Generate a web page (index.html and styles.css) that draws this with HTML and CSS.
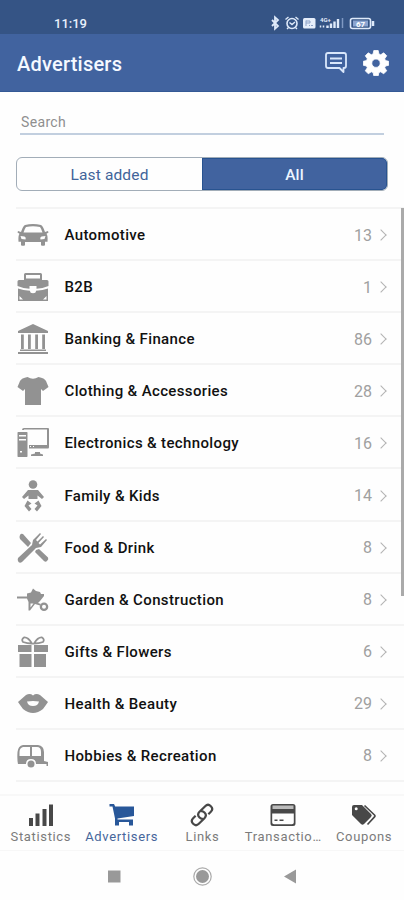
FILE: index.html
```
<!DOCTYPE html>
<html lang="en">
<head>
<meta charset="utf-8">
<title>Advertisers</title>
<link rel="stylesheet" href="styles.css">
</head>
<body>
<div class="app">
  <div class="status">
    <span class="time">11:19</span>
    <svg class="status-icons" width="108" height="16" viewBox="0 0 108 16" fill="none" stroke="#dfeafa">
      <path d="M3 5l6 6-3 2.800V2.200L9 5l-6 6" stroke-width="1.800"/>
      <circle cx="23" cy="8.500" r="5" stroke-width="1.600"/><path d="M16.500 4.500l3-2.500M29.500 4.500l-3-2.500M20.500 7.500l2.500 2 3-2.500M19.500 12.500l-1.500 1.500M26.500 12.500l1.500 1.500" stroke-width="1.400"/>
      <rect x="34" y="3" width="12.500" height="10.500" rx="1.500" fill="#e6eefb" stroke="none"/><path d="M37 5.500v5.500M37 6h4v2h-4M42 10.500h2M40 10.500h1" stroke="#8da2c7"/>
      <path d="M51.500 12.500v-2M54.500 12.500v-2" stroke-width="1.500"/>
      <path d="M58.500 13v-2.500M62 13V8.500M65.500 13V6.500M69 13V4" stroke-width="2.400"/><path d="M73.500 13V3" stroke="#7f98c3" stroke-width="1.500"/>
      <rect x="81.500" y="3.500" width="20" height="10" rx="2" stroke-width="1.600"/><rect x="84" y="5.500" width="15" height="6" fill="#8ba5d0" stroke="none"/><path d="M104 6v5" stroke-width="2.500"/>
      <text x="51" y="7" class="micro">4G+</text><text x="87" y="11.500" class="battery">67</text>
    </svg>
  </div>
  <header class="header">
    <h1>Advertisers</h1>
    <svg class="chat" width="24" height="24" viewBox="0 0 24 24" fill="none" stroke="#d9e7fb" stroke-width="1.800"><path d="M4 2h16q2 0 2 2v11q0 2-2 2h-.5v4l-4-4H4q-2 0-2-2V4q0-2 2-2z" stroke-linejoin="round"/><path d="M6 7.500h12M6 12h12"/></svg>
    <svg class="gear" width="26" height="26" viewBox="0 0 26 26"><path fill="#fff" stroke="#fff" stroke-width=".8" stroke-linejoin="round" fill-rule="evenodd" d="M10.800.5h4.400l.7 3.500 1.800.8 3-2 3 3-2 3 .8 1.800 3.200.7v4l-3.200.7-.8 1.800 2 3-3 3-3-2-1.800.8-.7 3.200h-4.400l-.7-3.200-1.800-.8-3 2-3-3 2-3-.8-1.800-3.200-.7v-4l3.200-.7.800-1.800-2-3 3-3 3 2 1.800-.8zM13 9a4.200 4.200 0 1 0 0 8.400A4.200 4.200 0 0 0 13 9z"/></svg>
  </header>
  <section class="filters">
    <div class="search">Search</div>
    <div class="segments"><div class="segment">Last added</div><div class="segment selected">All</div></div>
  </section>
  <main class="list">
    <div class="row"><svg class="icon" viewBox="0 0 32 32"><path fill-rule="evenodd" d="M8 6q8-2 16 0 2 1 4 7l3-1 .5 1.500-2 1.200q1.500 2 1 8H28v3.500q-2 1-4 0V23H8v3.200q-2 1-4 0V22.700H1.500q-.5-6 1-8l-2-1.200L1 12l3 1q2-6 4-7zM9 8q-1.500 2-2.500 5.500h19Q24.500 10 23 8q-7-1.500-14 0zM3.500 17l1 3 4 .5q1-2-1-3zM28.500 17l-1 3-4 .5q-1-2 1-3z"/></svg><span class="name">Automotive</span><span class="count">13</span><i class="chevron"></i></div>
    <div class="row"><svg class="icon" viewBox="0 0 32 32"><path fill-rule="evenodd" d="M7 9V3.500Q7 2 8.500 2h15Q25 2 25 3.500V9h5q1.500 0 1.500 1.500v4.500q-6 2.500-12 2.800V15h-7v2.800Q6.500 17.500.5 15v-4.500Q.5 9 2 9zm2-5v3.500h14V4zM1 17.500q5 2 12 2.300 0 2.500 3 2.500t3-2.500q7-.3 12-2.300V30H1zM2.500 25v3.500H6zM29.500 25v3.500H26z"/></svg><span class="name">B2B</span><span class="count">1</span><i class="chevron"></i></div>
    <div class="row"><svg class="icon" viewBox="0 0 32 32"><path d="M16 1l15 7v2H1V8zM4 11.500h2.800V26H4zM11 11.500h2.800V26H11zM18.200 11.500H21V26h-2.800zM25.200 11.500H28V26h-2.800zM3 26.500h26V28H3zM1 29h30v2H1z"/></svg><span class="name">Banking &amp; Finance</span><span class="count">86</span><i class="chevron"></i></div>
    <div class="row"><svg class="icon" viewBox="0 0 32 32"><path d="M10.500 2q5.500 3.500 11 0 6 1 7.500 4l2.500 6-5.500 4-2-2v16H8V14l-2 2-5.500-4L3 6q1.500-3 7.500-4z"/></svg><span class="name">Clothing &amp; Accessories</span><span class="count">28</span><i class="chevron"></i></div>
    <div class="row"><svg class="icon" viewBox="0 0 32 32"><path fill-rule="evenodd" d="M1 5h9q.5 0 .5 1v23q0 1-.5 1H1q-.5 0-.5-1V6q0-1 .5-1zm1 3v1.500h7V8zm0 4v1.500h7V12zm1 12v1.500h2V24zM5 3q0-2 2-2h24q1 0 1 1v18q0 1.500-1 1.500H12V18h18V2.500H7V3zM18 25h5v1.500l3 1V29H14v-1.500l4-1z"/><path fill="#fff" d="M13 19h1v1h-1zM16 19h1v1h-1z"/></svg><span class="name">Electronics &amp; technology</span><span class="count">16</span><i class="chevron"></i></div>
    <div class="row"><svg class="icon" viewBox="0 0 32 32"><circle cx="16" cy="4.500" r="4.300"/><path d="M11 10h10l6 7-2 2-4.500-3.500V19h-9v-3.500L7 19l-2-2zM10.500 20.500l4 3-3 2 3 3.500-2.500 2.500L7.500 26zM21.500 20.500l-4 3 3 2-3 3.500 2.500 2.500 4.500-5.500z"/></svg><span class="name">Family &amp; Kids</span><span class="count">14</span><i class="chevron"></i></div>
    <div class="row"><svg class="icon" viewBox="0 0 32 32"><path d="M3 3q1-2 3-1l8 9-3 4-8-8q-1-2 0-4zM19 18l3-1 9 8.500q1 1.500-1 3.500-1.500 1.500-3 0l-9-9zM23 1l1 1-5 6 1.500 1.500L26 4l1 1-5.500 6 1.500 1.500L29 7l1 1-6 7-5 1L5 30q-2 1.500-3.500 0T1 26l14-13 1-5z"/></svg><span class="name">Food &amp; Drink</span><span class="count">8</span><i class="chevron"></i></div>
    <div class="row"><svg class="icon" viewBox="0 0 32 32"><path fill-rule="evenodd" d="M0 12.500h10v-3l4-1 2-4 3 2.500 4 1 1 2h3v2l-4 5-2 2 3 1-1 1.500-5-1.500-5 6.500h-1.500V18L10 14.500H0zm13.500 7v4l3-4zM27 18.500a4.300 4.300 0 1 1 0 8.600 4.300 4.300 0 0 1 0-8.600zm0 2.300a2 2 0 1 0 0 4 2 2 0 0 0 0-4z"/></svg><span class="name">Garden &amp; Construction</span><span class="count">8</span><i class="chevron"></i></div>
    <div class="row"><svg class="icon" viewBox="0 0 32 32"><path d="M1 9h13.500v7H1zM17 9h14v7H17zM2.500 18h12v13h-12zM17 18h12v13H17z"/><path fill="none" stroke="#929292" stroke-width="1.800" d="M15 7.500q-4-6.500-8-6-3 2-1 4.500 4 1.500 9 1.500zM17 7.500q4-6.500 8-6 3 2 1 4.500-4 1.500-9 1.500z"/></svg><span class="name">Gifts &amp; Flowers</span><span class="count">6</span><i class="chevron"></i></div>
    <div class="row"><svg class="icon" viewBox="0 0 32 32"><path fill-rule="evenodd" d="M1 14L9 7q4-2 7 .5Q19 5 23 7l8 7q-2 3-5 7-10 8-20 0-3-4-5-7zm9-.5q1 4.500 6 4.500t6-4.500q-6-1-12 0z"/></svg><span class="name">Health &amp; Beauty</span><span class="count">29</span><i class="chevron"></i></div>
    <div class="row"><svg class="icon" viewBox="0 0 32 32"><path fill-rule="evenodd" d="M6 5h15q6 1 6 7v9l4 1v4h-1.500v-2H19q0-5-5-5t-5 5H1q-1-4-.5-12Q1 6 6 5zm0 2q-3.500 1-3.500 5v4H13V7zm9 0v9h9v-4q0-5-4-5z"/><circle cx="14" cy="24" r="3.500"/></svg><span class="name">Hobbies &amp; Recreation</span><span class="count">8</span><i class="chevron"></i></div>
    <div class="list-end"></div>
    <div class="scrollbar"></div>
  </main>
  <nav class="tabs">
    <div class="tab"><svg viewBox="0 0 28 26"><path d="M2 16h4v8H2zM8.500 11.500h4V24h-4zM15.500 7h4v17h-4zM22 2.500h4V24h-4z"/></svg><span>Statistics</span></div>
    <div class="tab active"><svg viewBox="0 0 28 26"><path fill-rule="evenodd" d="M1.500 2H6l1.200 2.500H26V14L9.500 16.500v1H25v6h-4V20H11v3.500H7v-7L4.500 4.500h-3z"/></svg><span>Advertisers</span></div>
    <div class="tab"><svg viewBox="0 0 28 26"><g transform="rotate(-45 14 13)" fill="none" stroke="#484848" stroke-width="2.200"><path d="M12 16.500q-1.500-1-1.500-3.500 0-4 4-4h8q4 0 4 4t-4 4h-3.500"/><path d="M16 9.500q1.500 1 1.500 3.500 0 4-4 4h-8q-4 0-4-4t4-4H9"/></g></svg><span>Links</span></div>
    <div class="tab"><svg viewBox="0 0 28 26"><path fill-rule="evenodd" d="M4 2h20q2.500 0 2.500 2.500v17Q26.500 24 24 24H4q-2.500 0-2.500-2.500v-17Q1.500 2 4 2zm-.8 9.500v9q0 1.800 1.800 1.800h18q1.800 0 1.800-1.800v-9z"/><path fill="#bbb" d="M3.500 3.500h21V7h-21z"/><path d="M5.500 17.500h3V19h-3zM10.500 17.500h4V19h-4z"/></svg><span>Transactio…</span></div>
    <div class="tab"><svg viewBox="0 0 28 26"><path fill-rule="evenodd" d="M2 5q0-2 2-2h8l9 9q1.500 1.500 0 3l-7 7q-1.500 1.500-3 0l-9-9zm4.200.2a1.500 1.500 0 1 0 0 3 1.500 1.500 0 0 0 0-3z"/><path fill="none" stroke="#484848" stroke-width="1.700" d="M14.500 3.500l10 9.500q1 1-.2 2.200L17.500 22.500"/></svg><span>Coupons</span></div>
  </nav>
  <div class="system"><svg width="404" height="50" viewBox="0 0 404 50"><path fill="#999" d="M108 19.500h12.500v12H108zM284 25.500l12-7v14z"/><circle cx="202.500" cy="25.500" r="6.500" fill="#999"/><circle cx="202.500" cy="25.500" r="8.700" fill="none" stroke="#aaa" stroke-width="1.200"/></svg></div>
</div>
</body>
</html>
```
FILE: styles.css
```
* { box-sizing: border-box; }
body { margin: 0; font-family: Roboto, "Liberation Sans", sans-serif; background: #fefefe; }
.app { width: 404px; height: 900px; display: flex; flex-direction: column; overflow: hidden; }
.status { height: 34px; flex: none; background: #355485; display: flex; align-items: flex-start; justify-content: space-between; padding: 15px 27px 0 54px; }
.time { color: #e8f0fc; font-size: 13px; line-height: 17px; font-weight: 500; }
.micro { font-size: 6px; font-weight: 700; fill: #e1ebfa; stroke: none; }
.battery { font-size: 8px; font-weight: 700; fill: #fff; stroke: none; }
.header { height: 58px; flex: none; background: #41639f; border-bottom: 1px solid #345995; display: flex; align-items: center; padding: 0 15px 0 17px; }
h1 { margin: 0 auto 0 0; padding-top: 2px; color: #f5f9ff; font-size: 20px; line-height: 24px; font-weight: 500; letter-spacing: 0.22px; }
.chat { margin-right: 15px; }
.filters { height: 115px; flex: none; padding: 20px 16px 0; }
.search { margin: 0 4px 22px; padding-left: 1px; height: 23px; border-bottom: 2px solid #c2cfdf; color: #8f8f8f; font-size: 14px; line-height: 20px; letter-spacing: 0.35px; }
.segments { height: 34px; display: flex; border: 1px solid #a2adb8; border-radius: 6px; overflow: hidden; }
.segment { flex: 1; text-align: center; color: #41649a; font-size: 15.5px; line-height: 34px; letter-spacing: 0.15px; }
.selected { color: #edf5ff; background: #41639f; box-shadow: inset 0 0 0 1px #285390; border-radius: 0 5px 5px 0; font-weight: 500; }
.list { position: relative; height: 587px; flex: none; padding-left: 16px; overflow: hidden; }
.row { height: 52.1px; display: flex; align-items: center; border-top: 2px solid #f4f4f4; padding: 2px 15px 0 1px; }
.list-end { height: 2px; background: #f4f4f4; }
.icon { width: 32px; height: 32px; flex: none; fill: #929292; }
.name { margin-left: 15.500px; flex: 1; color: #111; font-size: 15px; font-weight: 500; letter-spacing: 0.36px; }
.count { color: #a0a0a0; font-size: 16px; }
.chevron { width: 8px; height: 8px; margin: 0 4px 0 5px; border: solid #b3b3b3; border-width: 1.5px 1.5px 0 0; transform: rotate(45deg); }
.scrollbar { position: absolute; right: 0; top: 1px; width: 3px; height: 388px; background: #aaa; }
.tabs { height: 57px; flex: none; display: flex; border-top: 2px solid #f8f8f8; border-bottom: 1px solid #f7f7f7; }
.tab { width: 80.8px; flex: none; padding: 6px 0 0 1px; color: #7b7b7b; font-size: 13px; line-height: 18px; letter-spacing: 0.65px; text-align: center; white-space: nowrap; }
.tab svg { display: block; width: 28px; height: 26px; margin: 0 auto; fill: #484848; }
.tab.active { color: #46669b; }
.tab.active svg { fill: #285799; }
.system { height: 50px; flex: none; }
```
